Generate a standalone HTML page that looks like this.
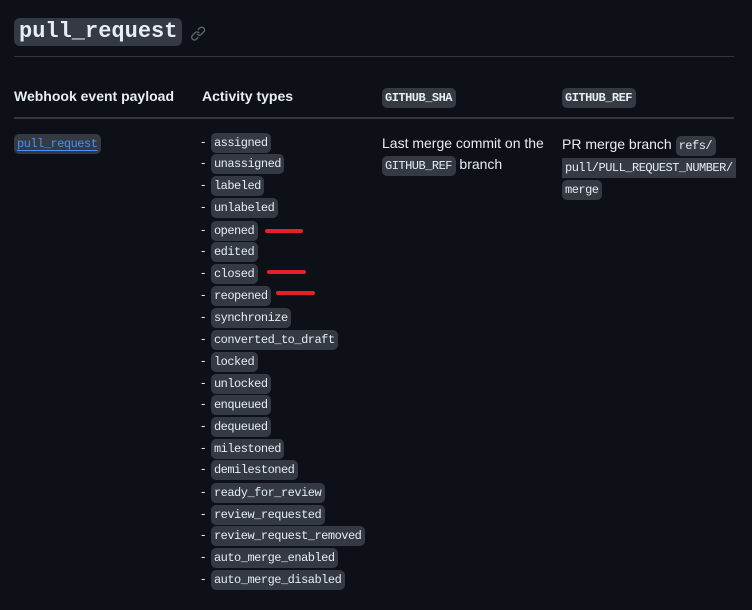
<!DOCTYPE html>
<html><head><style>
body{margin:0;background:#0d1117;width:752px;height:610px;overflow:hidden;font-family:"Liberation Sans",sans-serif;color:#e6edf3;position:relative}
.a{position:absolute}
code{font-family:"Liberation Mono",monospace;background:#343942;border-radius:5px;color:#e6edf3}
.c{font-size:12px;letter-spacing:-0.5px;padding:3px 3.5px 3px 3px;line-height:13px;white-space:nowrap}
.hr{position:absolute;height:1px;background:#30363d;left:14px;width:720px}
.th{font-weight:bold;font-size:14px;top:88px}
.red{position:absolute;height:4px;background:#e5202a;border-radius:2px}
.li{position:absolute;left:201px;font-size:13px;height:18px;line-height:18px}
.li code{margin-left:2px}
</style></head><body>
<div class="a" style="left:14px;top:18px"><code style="font-size:22px;font-weight:bold;padding:2px 5px;line-height:24px;display:inline-block;border-radius:6px">pull_request</code></div>
<svg class="a" style="left:190px;top:25px" width="16" height="16" viewBox="0 0 16 16"><path fill="#59636e" d="M7.78 3.97 9.28 2.47a3.5 3.5 0 0 1 4.950 4.95l-2.5 2.5a3.5 3.5 0 0 1-4.95 0 .75.75 0 0 1 1.06-1.06 2 2 0 0 0 2.83 0l2.5-2.5a2 2 0 0 0-2.830-2.83l-1.5 1.5a.75.75 0 0 1-1.06-1.06Zm-4.69 9.64a2 2 0 0 0 2.83 0l1.5-1.5a.75.75 0 0 1 1.06 1.060l-1.5 1.5a3.5 3.5 0 0 1-4.95-4.95l2.5-2.5a3.5 3.5 0 0 1 4.95 0 .75.75 0 0 1-1.06 1.06 2 2 0 0 0-2.83 0l-2.5 2.5a2 2 0 0 0 0 2.830Z"/></svg>
<div class="hr" style="top:56px"></div>
<div class="a th" style="left:14px">Webhook event payload</div>
<div class="a th" style="left:202px">Activity types</div>
<div class="a" style="left:382px;top:88px"><code class="c" style="font-weight:bold">GITHUB_SHA</code></div>
<div class="a" style="left:562px;top:88px"><code class="c" style="font-weight:bold">GITHUB_REF</code></div>
<div class="hr" style="top:117px;height:2px"></div>
<div class="a" style="left:14px;top:134px"><code class="c" style="color:#4493f8;text-decoration:underline;text-underline-offset:3px">pull_request</code></div>
<div class="a" style="left:382px;top:133px;font-size:14px;line-height:21px;width:175px">Last merge commit on the <code class="c">GITHUB_REF</code> branch</div>
<div class="a" style="left:562px;top:133px;font-size:14px;line-height:22px;width:180px">PR merge branch <code class="c">refs/</code><br><code class="c" style="border-radius:0">pull/PULL_REQUEST_NUMBER/</code><br><code class="c">merge</code></div>
<div class="li" style="top:133px">- <code class="c">assigned</code></div>
<div class="li" style="top:154px">- <code class="c">unassigned</code></div>
<div class="li" style="top:176px">- <code class="c">labeled</code></div>
<div class="li" style="top:198px">- <code class="c">unlabeled</code></div>
<div class="li" style="top:221px">- <code class="c">opened</code></div>
<div class="li" style="top:242px">- <code class="c">edited</code></div>
<div class="li" style="top:264px">- <code class="c">closed</code></div>
<div class="li" style="top:286px">- <code class="c">reopened</code></div>
<div class="li" style="top:308px">- <code class="c">synchronize</code></div>
<div class="li" style="top:330px">- <code class="c">converted_to_draft</code></div>
<div class="li" style="top:352px">- <code class="c">locked</code></div>
<div class="li" style="top:374px">- <code class="c">unlocked</code></div>
<div class="li" style="top:395px">- <code class="c">enqueued</code></div>
<div class="li" style="top:417px">- <code class="c">dequeued</code></div>
<div class="li" style="top:439px">- <code class="c">milestoned</code></div>
<div class="li" style="top:460px">- <code class="c">demilestoned</code></div>
<div class="li" style="top:483px">- <code class="c">ready_for_review</code></div>
<div class="li" style="top:505px">- <code class="c">review_requested</code></div>
<div class="li" style="top:526px">- <code class="c">review_request_removed</code></div>
<div class="li" style="top:548px">- <code class="c">auto_merge_enabled</code></div>
<div class="li" style="top:570px">- <code class="c">auto_merge_disabled</code></div>
<div class="red" style="left:265px;top:229px;width:38px"></div>
<div class="red" style="left:267px;top:270px;width:39px"></div>
<div class="red" style="left:276px;top:291px;width:39px"></div>
</body></html>
